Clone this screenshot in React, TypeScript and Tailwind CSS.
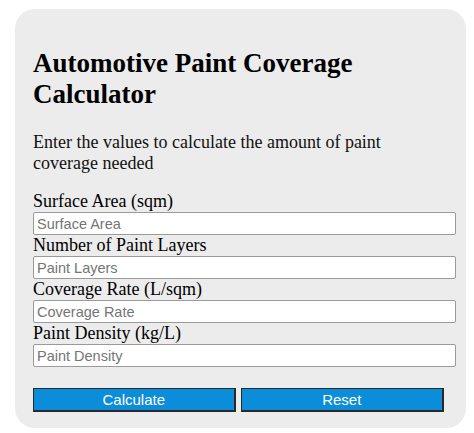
import React from 'react';

const fields = [
  { label: 'Surface Area (sqm)', placeholder: 'Surface Area' },
  { label: 'Number of Paint Layers', placeholder: 'Paint Layers' },
  { label: 'Coverage Rate (L/sqm)', placeholder: 'Coverage Rate' },
  { label: 'Paint Density (kg/L)', placeholder: 'Paint Density' },
];

const serif = { fontFamily: '"Liberation Serif", "Times New Roman", serif' };

export default function App() {
  return (
    <div className="w-[474px] h-[433px] bg-white pt-[9px] pl-[15px]">
      <div
        className="w-[451px] h-[419px] bg-[#ececec] rounded-[20px] pt-[39px] pl-[18px] pr-[22px] text-black"
        style={serif}
      >
        <h2 className="text-[27px] font-bold leading-[31px] m-0">Automotive Paint Coverage Calculator</h2>
        <p className="text-[18px] leading-[20.7px] mt-[22px] text-[#111]">
          Enter the values to calculate the amount of paint coverage needed
        </p>
        <div className="mt-[18px] flex flex-col">
          {fields.map((f) => (
            <div key={f.label} className="flex flex-col">
              <label className="text-[18px] leading-[21px] h-[21px] whitespace-nowrap">{f.label}</label>
              <input
                type="text"
                placeholder={f.placeholder}
                className="w-[423px] h-[23px] bg-white border border-[#9a9a9a] rounded-[2px] pl-[3px] text-[14.5px] outline-none placeholder:text-[#757575]"
                style={{ fontFamily: '"Liberation Sans", Arial, sans-serif' }}
              />
            </div>
          ))}
        </div>
        <div className="mt-[21px] flex gap-[5px]">
          <button
            className="w-[203px] h-[24px] bg-[#0b8dd9] text-white text-[15px] leading-none border-t border-l border-b-2 border-r-2 border-[#2a2a2a]"
            style={{ fontFamily: '"Liberation Sans", Arial, sans-serif' }}
          >
            Calculate
          </button>
          <button
            className="w-[204px] h-[24px] bg-[#0b8dd9] text-white text-[15px] leading-none border-t border-l border-b-2 border-r-2 border-[#2a2a2a]"
            style={{ fontFamily: '"Liberation Sans", Arial, sans-serif' }}
          >
            Reset
          </button>
        </div>
      </div>
    </div>
  );
}
